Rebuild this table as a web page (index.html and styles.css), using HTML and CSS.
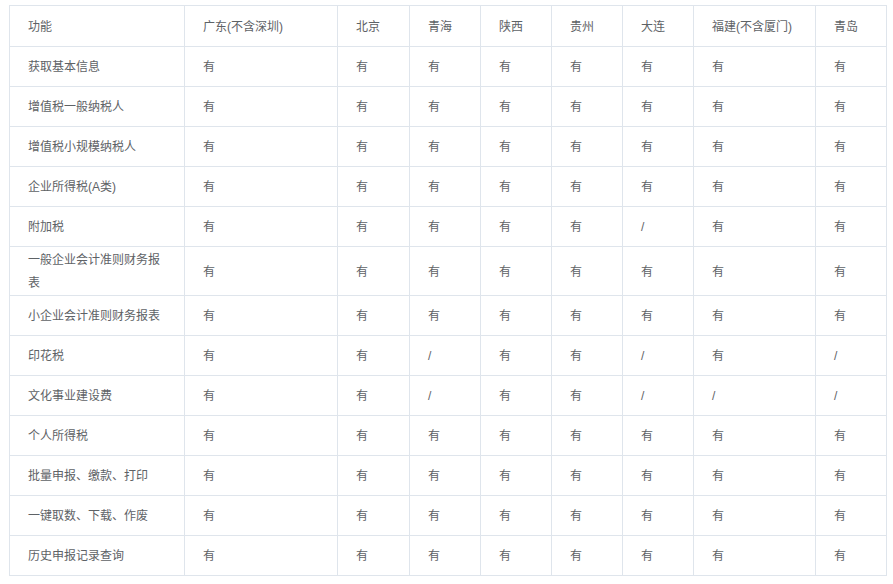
FILE: index.html
```html
<!DOCTYPE html>
<html lang="zh">
<head>
<meta charset="utf-8">
<title>功能对照表</title>
<link rel="stylesheet" href="styles.css">
</head>
<body>
<table class="grid">
  <colgroup>
    <col class="c-feature">
    <col class="c-gd">
    <col class="c-bj">
    <col class="c-s">
    <col class="c-s">
    <col class="c-s">
    <col class="c-s">
    <col class="c-fj">
    <col class="c-s">
  </colgroup>
  <thead>
    <tr><th>功能</th><th>广东(不含深圳)</th><th>北京</th><th>青海</th><th>陕西</th><th>贵州</th><th>大连</th><th>福建(不含厦门)</th><th>青岛</th></tr>
  </thead>
  <tbody>
    <tr><td>获取基本信息</td><td>有</td><td>有</td><td>有</td><td>有</td><td>有</td><td>有</td><td>有</td><td>有</td></tr>
    <tr><td>增值税一般纳税人</td><td>有</td><td>有</td><td>有</td><td>有</td><td>有</td><td>有</td><td>有</td><td>有</td></tr>
    <tr><td>增值税小规模纳税人</td><td>有</td><td>有</td><td>有</td><td>有</td><td>有</td><td>有</td><td>有</td><td>有</td></tr>
    <tr><td>企业所得税(A类)</td><td>有</td><td>有</td><td>有</td><td>有</td><td>有</td><td>有</td><td>有</td><td>有</td></tr>
    <tr><td>附加税</td><td>有</td><td>有</td><td>有</td><td>有</td><td>有</td><td>/</td><td>有</td><td>有</td></tr>
    <tr><td>一般企业会计准则财务报表</td><td>有</td><td>有</td><td>有</td><td>有</td><td>有</td><td>有</td><td>有</td><td>有</td></tr>
    <tr><td>小企业会计准则财务报表</td><td>有</td><td>有</td><td>有</td><td>有</td><td>有</td><td>有</td><td>有</td><td>有</td></tr>
    <tr><td>印花税</td><td>有</td><td>有</td><td>/</td><td>有</td><td>有</td><td>/</td><td>有</td><td>/</td></tr>
    <tr><td>文化事业建设费</td><td>有</td><td>有</td><td>/</td><td>有</td><td>有</td><td>/</td><td>/</td><td>/</td></tr>
    <tr><td>个人所得税</td><td>有</td><td>有</td><td>有</td><td>有</td><td>有</td><td>有</td><td>有</td><td>有</td></tr>
    <tr><td>批量申报、缴款、打印</td><td>有</td><td>有</td><td>有</td><td>有</td><td>有</td><td>有</td><td>有</td><td>有</td></tr>
    <tr><td>一键取数、下载、作废</td><td>有</td><td>有</td><td>有</td><td>有</td><td>有</td><td>有</td><td>有</td><td>有</td></tr>
    <tr><td>历史申报记录查询</td><td>有</td><td>有</td><td>有</td><td>有</td><td>有</td><td>有</td><td>有</td><td>有</td></tr>
  </tbody>
</table>
</body>
</html>
```
FILE: styles.css
```css
html, body {
  margin: 0;
  padding: 0;
  background: #ffffff;
}

body {
  font-family: "Liberation Sans", "Noto Sans CJK SC", sans-serif;
  font-size: 12px;
  color: #5e6266;
}

.grid {
  margin: 5px 0 0 9px;
  border-collapse: collapse;
  table-layout: fixed;
  width: 878px;
}

.c-feature { width: 175px; }
.c-gd { width: 153px; }
.c-bj { width: 72px; }
.c-s { width: 71px; }
.c-fj { width: 122px; }

.grid th,
.grid td {
  box-sizing: border-box;
  border: 1px solid #dfe5ec;
  height: 40px;
  padding: 2px 18px 0 18px;
  line-height: 23px;
  text-align: left;
  vertical-align: middle;
  font-weight: normal;
  word-break: break-all;
}

.grid thead th {
  height: 41px;
}
```
